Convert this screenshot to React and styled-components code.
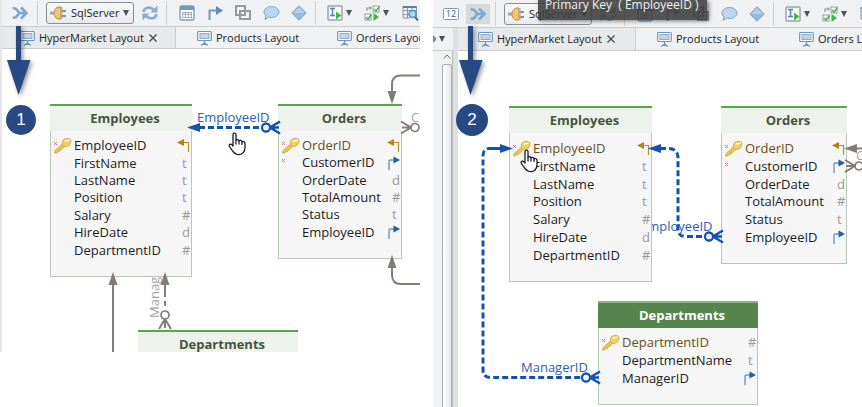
import React from "react";
import styled, { createGlobalStyle } from "styled-components";

const BLUE = "#1353ae";
const GREY = "#857d74";
const NAVY = "#264a81";
const UI_FONT = '"Open Sans", "Noto Sans", sans-serif';

const GlobalStyle = createGlobalStyle`
  * { box-sizing: border-box; }
  body { margin: 0; background: #fff; font-family: ${UI_FONT}; color: #222; }
  button, select { font: inherit; color: inherit; background: none; border: 0; padding: 0; margin: 0; }
  svg { display: block; flex: none; }
`;

const Page = styled.main`
  display: grid;
  grid-template-columns: minmax(0, 420fr) 13px minmax(0, 429fr);
  align-items: start;
  min-height: 100vh;
  overflow: hidden;
`;

const Panel = styled.section`
  position: relative;
  grid-column: ${(p) => p.$column};
  border-left: ${(p) => (p.$edge ? "2px solid #e6e6e6" : "0")};
  min-width: 0;
`;

const Toolbar = styled.div`
  display: flex;
  align-items: center;
  height: ${(p) => p.$height}px;
  padding-left: ${(p) => p.$start}px;
  background: #f0f1f2;
  border-bottom: 1px solid #cbcdcf;
  overflow: hidden;
`;

const ToolButton = styled.button`
  display: flex;
  flex: none;
  align-items: center;
  justify-content: center;
  width: 28px;
  height: 20px;
`;

const MergeButton = styled(ToolButton)`
  width: 24px;
  margin-right: 5px;
  background: ${(p) => (p.$pressed ? "#d6d9db" : "transparent")};
`;

const CalendarButton = styled(ToolButton)`
  width: 30px;
`;

const SplitButton = styled(ToolButton)`
  justify-content: flex-start;
  gap: 3px;
  width: 37px;
  padding-left: 5px;
`;

const Divider = styled.span`
  flex: none;
  width: 1px;
  height: 24px;
  margin: 0 6px 0 2px;
  background: #cdcfd1;
  &:first-of-type { margin-left: 0; }
`;

const ConnectionBox = styled.label`
  display: flex;
  flex: none;
  align-items: center;
  width: 88px;
  height: 22px;
  margin: 0 2px;
  padding: 0 4px 0 3px;
  border: 1px solid #8b8e91;
  border-radius: 3px;
  background: linear-gradient(#f7f8f8, #e9ebec);
`;

const ConnectionSelect = styled.select`
  appearance: none;
  flex: 1;
  min-width: 0;
  padding-left: 4px;
  font-size: 11px;
  line-height: 18px;
`;

const TabBar = styled.div`
  display: flex;
  height: ${(p) => p.$height}px;
  background: #f0f1f2;
  border-bottom: 1px solid #cbcdcf;
  overflow: hidden;
`;

const TabItem = styled.div`
  display: flex;
  flex: none;
  align-items: center;
  gap: 5px;
  min-width: ${(p) => p.$width}px;
  padding-left: ${(p) => p.$start}px;
  height: 100%;
  background: ${(p) => (p.$active ? "#e8e9ea" : "transparent")};
  border-right: ${(p) => (p.$active ? "1px solid #cbcdcf" : "0")};
`;

const TabButton = styled.button`
  display: flex;
  align-items: center;
  gap: 4px;
  font-size: 11px;
  line-height: 18px;
  white-space: nowrap;
`;

const Workspace = styled.div`
  display: flex;
`;

const Editor = styled.div`
  flex: 1;
  min-width: 0;
`;

const Dock = styled.aside`
  display: flex;
  flex-direction: column;
  flex: none;
  width: 25px;
  background: #f0f1f2;
  border-right: 5px solid #dde0e1;
`;

const DockHeader = styled.div`
  display: flex;
  align-items: center;
  gap: 3px;
  height: 23px;
  border-bottom: 1px solid #cbcdcf;
`;

const ScrollTrack = styled.div`
  display: flex;
  flex: 1;
  flex-direction: column;
  align-items: center;
  gap: 5px;
  width: 12px;
  margin-left: 8px;
  padding-top: 3px;
  border-right: 1px solid #b9bcbe;
`;

const ScrollThumb = styled.div`
  flex: 1;
  width: 10px;
  border: 1px solid #a9adb0;
  border-bottom: 0;
  border-radius: 3px 3px 0 0;
  background: linear-gradient(90deg, #fff, #e4e6e8);
`;

const Canvas = styled.div`
  position: relative;
  height: ${(p) => p.$height}px;
  background: #fff;
  overflow: hidden;
`;

const Layer = styled.svg`
  position: absolute;
  inset: 0;
  width: 100%;
  height: 100%;
  pointer-events: none;
`;

const EdgeLabel = styled.text`
  font-family: ${UI_FONT};
  font-size: 13px;
  fill: ${(p) => (p.$muted ? "#a5a5a5" : "#2c60b4")};
`;

const Node = styled.article`
  position: absolute;
  left: ${(p) => p.$x}px;
  top: ${(p) => p.$y}px;
  width: ${(p) => p.$width}px;
  padding-bottom: 17px;
  background: #f6f6f6;
  border: 1px solid #b9c9b9;
  border-top: 0;
`;

const NodeTitle = styled.h2`
  margin: 0 -1px;
  height: 27px;
  padding-left: 8px;
  border-top: 2px solid ${(p) => (p.$filled ? "#8fb088" : "#5aa44e")};
  background: ${(p) => (p.$filled ? "#56854e" : "#edf2ec")};
  color: ${(p) => (p.$filled ? "#fff" : "#47543f")};
  font-size: 13px;
  line-height: 25px;
  font-weight: 700;
  text-align: center;
`;

const Columns = styled.ul`
  display: grid;
  grid-auto-rows: 1fr;
  height: ${(p) => p.$height}px;
  margin: ${(p) => p.$gap}px 0 0;
  padding: 0;
  list-style: none;
`;

const Column = styled.li`
  display: grid;
  grid-template-columns: 23px 1fr 14px;
  align-items: center;
  min-height: 0;
  font-size: 13px;
  line-height: 17px;
  color: ${(p) => (p.$primary ? "#65501f" : "#1c1c1c")};
  white-space: nowrap;
`;

const ColumnType = styled.span`
  padding-left: 5px;
  color: #999b98;
`;

const CalloutArrow = styled.svg`
  position: absolute;
  left: ${(p) => p.$x}px;
  top: 26px;
  filter: drop-shadow(2px 2px 2px rgba(0, 0, 0, 0.4));
`;

const StepBadge = styled.span`
  position: absolute;
  left: ${(p) => p.$x}px;
  top: ${(p) => p.$y}px;
  width: ${(p) => p.$size}px;
  height: ${(p) => p.$size}px;
  border-radius: 50%;
  background: ${NAVY};
  color: #fff;
  font-family: "Liberation Sans", Arial, sans-serif;
  font-size: 17px;
  line-height: ${(p) => p.$size}px;
  text-align: center;
`;

const Tooltip = styled.div`
  position: absolute;
  left: 105px;
  top: 0;
  height: 20px;
  padding: 0 8px 0 7px;
  background: rgba(62, 62, 62, 0.88);
  box-shadow: 2px 1px 4px rgba(0, 0, 0, 0.5);
  color: #eee;
  font-size: 12px;
  line-height: 10px;
  white-space: pre;
`;

const PointerIcon = styled.svg`
  position: absolute;
  left: ${(p) => p.$x}px;
  top: ${(p) => p.$y}px;
`;

/* ---------- icons ---------- */

const Caret = () => (
  <svg width="6" height="6" viewBox="0 0 6 6"><path d="M0 0H6L3 6Z" fill="#505050" /></svg>
);

const MergeIcon = () => (
  <svg width="17" height="14" viewBox="0 0 17 14" fill="none" stroke="#7aa8d0" strokeWidth="2.6">
    <path d="M.8 2L4 2.800L7.500 7L4 11.200L.8 12M7 7H14M9 1.500L14.500 7L9 12.500" />
  </svg>
);

const PlugIcon = () => (
  <svg width="17" height="14" viewBox="0 0 17 14">
    <rect x="0" y="5.5" width="5" height="3" fill="#a6a8ac" />
    <path d="M11 1V13H9C6 13 4 10 4 7S6 1 9 1Z" fill="#edc47a" stroke="#c28d3c" />
    <path d="M11.5 4H16V6H11.5ZM11.5 9H16V11H11.5Z" fill="#8d9095" />
    <path d="M12 1V13" stroke="#a2a4a8" />
  </svg>
);

const RefreshIcon = () => (
  <svg width="16" height="16" viewBox="0 0 16 16" fill="none" stroke="#86b0d3" strokeWidth="2.600">
    <path d="M1.500 7C2 2.500 8 1 12 5M14.500 9C14 13.500 8 15 4 11" />
    <path d="M15.500 .5V7.500H8.500ZM.5 15.500V8.500H7.500Z" fill="#86b0d3" stroke="none" />
  </svg>
);

const TableIcon = () => (
  <svg width="16" height="16" viewBox="0 0 16 16">
    <rect x="1" y="1" width="14" height="14" rx="2" fill="#fff" stroke="#7a9fc0" strokeWidth="1.4" />
    <path d="M1 3Q1 1 3 1H13Q15 1 15 3V5H1Z" fill="#6d9bc4" />
    <path d="M3.500 7.500H12.500M3.500 9.500H12.500M3.500 12.500H12.500M3.500 7V13M6.500 7V13M9.500 7V13M12.500 7V13" stroke="#a7afb6" />
  </svg>
);

const ElbowIcon = () => (
  <svg width="15" height="14" viewBox="0 0 15 14">
    <path d="M1.500 14V4.500H10" fill="none" stroke="#7198bd" strokeWidth="2" />
    <path d="M8 0L15 4.500L8 9Z" fill="#5b8ebd" />
  </svg>
);

const ShapesIcon = () => (
  <svg width="16" height="16" viewBox="0 0 16 16" fill="none" stroke="#97999b" strokeWidth="2">
    <rect x="1" y="1" width="9" height="9" /><rect x="5" y="6" width="10" height="8" />
  </svg>
);

const BubbleIcon = () => (
  <svg width="17" height="16" viewBox="0 0 17 16">
    <path d="M8.500 1.500C12.600 1.500 16 4 16 7S12.600 12.500 8.500 12.500C7.500 12.500 6.500 12.400 5.600 12.100L2 14.500L3 10.700C1.700 9.700 1 8.400 1 7C1 4 4.400 1.500 8.500 1.500Z" fill="#bcd7ed" stroke="#7ea6c8" />
  </svg>
);

const DiamondIcon = () => (
  <svg width="16" height="16" viewBox="0 0 16 16"><path d="M8 .8L15.200 8L8 15.200L.8 8Z" fill="#94bbdb" stroke="#7aa4c8" /><path d="M8 2L14 8H2Z" fill="#b4d0e7" /></svg>
);

const RunIcon = () => (
  <svg width="16" height="16" viewBox="0 0 16 16">
    <rect x="1" y="1" width="14" height="14" rx="1" fill="#f8f8f8" stroke="#a0a2a4" strokeWidth="1.500" />
    <path d="M3 3.500H8M5.500 3.500V10M3 10.500H8" stroke="#5d7fc2" strokeWidth="1.500" />
    <path d="M9 6.500L14.500 10.500L9 14.500Z" fill="#44b34d" />
  </svg>
);

const ChecksIcon = () => (
  <svg width="16" height="16" viewBox="0 0 16 16" fill="none">
    <path d="M3 6V3H7" stroke="#999" strokeWidth="1.200" /><path d="M5.500 1L8 3L5.500 5Z" fill="#999" />
    <rect x="9" y="1" width="6" height="6" fill="#fff" stroke="#999b9d" /><rect x="1" y="9" width="6" height="6" fill="#fff" stroke="#999b9d" />
    <path d="M10 4L12 6L15.500 1.500M2 12L4 14L7.500 9.500" stroke="#44b34d" strokeWidth="1.500" />
    <path d="M9.500 8L15 12L9.500 16Z" fill="#44b34d" />
  </svg>
);

const SearchGridIcon = () => (
  <svg width="17" height="16" viewBox="0 0 17 16" fill="none">
    <path d="M1 1.500H14.500V13M1 1V13H8M1 5.500H14M1 9.500H9M5.500 2V13M10 2V7" stroke="#8d949c" />
    <path d="M1 2H14.500" stroke="#5f7f9e" strokeWidth="2" />
    <circle cx="10.500" cy="9" r="3.500" fill="#a7dcf0" stroke="#5795b4" strokeWidth="1.500" /><path d="M13 12L16 15.500" stroke="#477594" strokeWidth="2" />
  </svg>
);

const NumberIcon = () => (
  <svg width="16" height="12" viewBox="0 0 16 12">
    <rect x=".5" y=".5" width="15" height="11" rx="1" fill="#f9fafb" stroke="#809bb2" />
    <text x="8" y="9" textAnchor="middle" fontSize="9" fontFamily="Open Sans" fill="#43678a">12</text>
  </svg>
);

const BoardIcon = () => (
  <svg width="15" height="16" viewBox="0 0 15 16">
    <rect x=".7" y="1.500" width="13.600" height="9" rx="1" fill="#fff" stroke="#6f97bd" strokeWidth="1.200" />
    <rect x="3" y="3.500" width="9" height="5" fill="#c5d3e7" stroke="#91acc9" />
    <path d="M7.500 11V13L4 15.500M7.500 13L11 15.500M7.500 13V15" fill="none" stroke="#6f97bd" strokeWidth="1.200" />
  </svg>
);

const CloseIcon = () => (
  <svg width="8" height="8" viewBox="0 0 8 8"><path d="M.5 .5L7.500 7.500M7.500 .5L.5 7.500" stroke="#4c4c4c" strokeWidth="1.400" /></svg>
);

const ColumnIcon = ({ icon }) => (
  <svg width="22" height="17" viewBox="0 0 22 17">
    {icon && <path d="M3 5L6 8M6 5L3 8" stroke="#c98080" />}
    {icon === "key" && (
      <g>
        <path d="M11.500 7L4 13.500L3.500 16H6L6.500 14.500H8.500V13H10L13.500 9.500Z" fill="#ecc644" stroke="#c6a443" strokeWidth=".7" />
        <path d="M12.500 2.500Q15.500 .5 18.500 1.500Q20.800 2.500 19.800 5.500Q19 9 15.500 9.500Q12.500 10 11.300 8Q10.500 5 12.500 2.500Z" fill="#f0d058" stroke="#c6a443" strokeWidth=".7" />
        <path d="M14 4L18.300 3.200" stroke="#fdf6d8" strokeWidth="1.600" strokeLinecap="round" />
      </g>
    )}
  </svg>
);

const ReferenceMark = ({ type }) =>
  type === "in" ? (
    <svg width="13" height="14" viewBox="0 0 13 14"><path d="M5 3.500H11.500V13" fill="none" stroke="#b5932a" strokeWidth="1.200" /><path d="M0 3.500L7 0V7Z" fill="#b0860d" /></svg>
  ) : (
    <svg width="13" height="14" viewBox="0 0 13 14"><path d="M2 14V5.500Q2 4 4 4H7" fill="none" stroke="#6d97bd" strokeWidth="1.400" /><path d="M6.500 .5L13 4L6.500 7.500Z" fill="#27608f" /></svg>
  );

const HandPointer = ({ x, y }) => (
  <PointerIcon $x={x} $y={y} width="18" height="24" viewBox="0 0 18 24">
    <path d="M5 14V2.600C5 .5 8 .5 8 2.600V8.500C8.500 7.300 10.800 7.400 11 9C11.600 8 13.700 8.200 14 9.800C14.800 9 17 9.400 17 11.300V15.500C17 19.500 14.500 22.700 10.500 22.700C6.500 22.700 4.500 19 1.300 14.300C.5 12.500 2.500 11.300 4 12.800Z" fill="#fff" stroke="#1b1b2b" strokeWidth="1.300" strokeLinejoin="round" />
    <path d="M8 8.500V12.500M11 9V12.500M14 10V13" stroke="#1b1b2b" strokeWidth="1.200" />
  </PointerIcon>
);

/* ---------- edge endings ---------- */

const Head = ({ x, y, turn = 0, color = BLUE }) => (
  <path d="M0 0L-13 -4.500V4.500Z" transform={`translate(${x} ${y}) rotate(${turn})`} fill={color} />
);

/* Crow's foot whose open side touches the node at (x, y). */
const CrowFoot = ({ x, y, turn = 0, color = BLUE, weight = 2.6 }) => (
  <g transform={`translate(${x} ${y}) rotate(${turn})`} fill="none" stroke={color} strokeWidth={weight}>
    <path d="M1 -6L-9 0L1 6M-9 0H0" />
    <circle cx="-13" cy="0" r="4" fill="#fff" strokeWidth={weight - 0.3} />
  </g>
);

const dashed = { fill: "none", stroke: BLUE, strokeWidth: 3, strokeDasharray: "6 3", strokeLinecap: "butt" };

/* ---------- composed parts ---------- */

function ToolStrip({ height, start, withNumber }) {
  return (
    <Toolbar $height={height} $start={start} role="toolbar">
      {withNumber && <CalendarButton aria-label="Numbers"><NumberIcon /></CalendarButton>}
      <MergeButton $pressed={withNumber} aria-label="Follow references"><MergeIcon /></MergeButton>
      <Divider />
      <ConnectionBox>
        <PlugIcon />
        <ConnectionSelect aria-label="Connection" defaultValue="SqlServer"><option>SqlServer</option></ConnectionSelect>
        <Caret />
      </ConnectionBox>
      <ToolButton aria-label="Refresh"><RefreshIcon /></ToolButton>
      <Divider />
      <ToolButton aria-label="Table"><TableIcon /></ToolButton>
      <ToolButton aria-label="Relation"><ElbowIcon /></ToolButton>
      <ToolButton aria-label="Group"><ShapesIcon /></ToolButton>
      <ToolButton aria-label="Comment"><BubbleIcon /></ToolButton>
      <ToolButton aria-label="Shape"><DiamondIcon /></ToolButton>
      <Divider />
      <SplitButton aria-label="Run"><RunIcon /><Caret /></SplitButton>
      <SplitButton aria-label="Validate"><ChecksIcon /><Caret /></SplitButton>
      <ToolButton aria-label="Browse data"><SearchGridIcon /></ToolButton>
    </Toolbar>
  );
}

function Tabs({ height, tabs }) {
  return (
    <TabBar $height={height} role="tablist">
      {tabs.map((t, i) => (
        <TabItem key={t.label} $active={i === 0} $width={t.width} $start={t.start}>
          <TabButton role="tab" aria-selected={i === 0}><BoardIcon />{t.label}</TabButton>
          {i === 0 && <button aria-label="Close tab"><CloseIcon /></button>}
        </TabItem>
      ))}
    </TabBar>
  );
}

function Entity({ x, y, width, title, filled, gap = 6, listHeight, columns }) {
  return (
    <Node $x={x} $y={y} $width={width}>
      <NodeTitle $filled={filled}>{title}</NodeTitle>
      <Columns $height={listHeight} $gap={gap}>
        {columns.map(([name, type, icon, primary]) => (
          <Column key={name} $primary={primary}>
            <ColumnIcon icon={icon} />
            <span>{name}</span>
            {type === "in" || type === "out" ? <ReferenceMark type={type} /> : <ColumnType>{type}</ColumnType>}
          </Column>
        ))}
      </Columns>
    </Node>
  );
}

const Callout = ({ x }) => (
  <CalloutArrow $x={x} width="24" height="70" viewBox="0 0 24 70"><path d="M9 0H14V34H23.500L11.500 69L0 34H9Z" fill={NAVY} /></CalloutArrow>
);

const employees = (primary) => [
  ["EmployeeID", "in", "key", primary],
  ["FirstName", "t"],
  ["LastName", "t"],
  ["Position", "t"],
  ["Salary", "#"],
  ["HireDate", "d"],
  ["DepartmentID", "#"],
];

const orders = [
  ["OrderID", "in", "key", true],
  ["CustomerID", "out", "mark"],
  ["OrderDate", "d"],
  ["TotalAmount", "#"],
  ["Status", "t"],
  ["EmployeeID", "out"],
];

const departments = [
  ["DepartmentID", "#", "key", true],
  ["DepartmentName", "t"],
  ["ManagerID", "out"],
];

function FirstStep() {
  return (
    <Panel $column={1} $edge>
      <ToolStrip height={27} start={6} />
      <Tabs
        height={22}
        tabs={[
          { label: "HyperMarket Layout", width: 174, start: 18 },
          { label: "Products Layout", width: 140, start: 21 },
          { label: "Orders Layout", width: 140, start: 21 },
        ]}
      />
      <Canvas $height={303}>
        <Layer>
          <EdgeLabel x="195" y="73">EmployeeID</EdgeLabel>
          <EdgeLabel $muted x="409" y="73">CustomerID</EdgeLabel>
          <EdgeLabel $muted transform="translate(157 269) rotate(-90)">ManagerID</EdgeLabel>
        </Layer>
        <Entity x={48} y={55} width={142} title="Employees" listHeight={122} columns={employees(false)} />
        <Entity x={276} y={55} width={124} title="Orders" listHeight={104} columns={orders} />
        <Entity x={136} y={281} width={160} title="Departments" listHeight={53} columns={departments} />
        <Layer>
          <path d="M197 78.500H258" {...dashed} />
          <Head x={185} y={78.5} turn={180} />
          <CrowFoot x={277} y={78.5} />
          <g fill="none" stroke={GREY} strokeWidth="2">
            <path d="M420 26.500H399Q390 26.500 390 35V46" />
            <path d="M420 235H399Q390 235 390 226V216" />
            <path d="M111 303V234M163 234V248M163 252V257" />
          </g>
          <Head x={390} y={55} turn={90} color={GREY} />
          <Head x={390} y={206} turn={-90} color={GREY} />
          <Head x={111} y={223} turn={-90} color={GREY} />
          <Head x={163} y={223} turn={-90} color={GREY} />
          <CrowFoot x={400} y={78.5} turn={180} color={GREY} weight={2} />
          <CrowFoot x={163} y={279} turn={90} color={GREY} weight={2} />
        </Layer>
        <HandPointer x={226} y={83} />
      </Canvas>
      <Callout x={5} />
      <StepBadge $x={4} $y={105} $size={30}>1</StepBadge>
    </Panel>
  );
}

function SecondStep() {
  return (
    <Panel $column={3}>
      <ToolStrip height={28} start={3} withNumber />
      <Workspace>
        <Dock>
          <DockHeader>
            <svg width="3" height="8" viewBox="0 0 3 8"><path d="M0 0L3 3V5L0 8Z" fill="#5c8fb9" /></svg>
            <Caret />
          </DockHeader>
          <ScrollTrack>
            <svg width="8" height="5" viewBox="0 0 8 5"><path d="M.5 4.500L4 1L7.500 4.500" fill="none" stroke="#777" /></svg>
            <ScrollThumb />
          </ScrollTrack>
        </Dock>
        <Editor>
          <Tabs
            height={23}
            tabs={[
              { label: "HyperMarket Layout", width: 178, start: 20 },
              { label: "Products Layout", width: 142, start: 21 },
              { label: "Orders Layout", width: 142, start: 21 },
            ]}
          />
          <Canvas $height={356}>
            <Layer>
              <EdgeLabel x="182" y="180">EmployeeID</EdgeLabel>
              <EdgeLabel x="63" y="321">ManagerID</EdgeLabel>
              <EdgeLabel $muted x="398" y="109">CustomerID</EdgeLabel>
            </Layer>
            <Entity x={51} y={55} width={143} title="Employees" gap={7} listHeight={124} columns={employees(true)} />
            <Entity x={263} y={55} width={126} title="Orders" gap={7} listHeight={106} columns={orders} />
            <Entity x={140} y={250} width={160} title="Departments" filled listHeight={53} columns={departments} />
            <Layer>
              <path d="M44 97.500H31Q25 98 25 105V319Q25 326.500 33 326.500H123" {...dashed} />
              <path d="M31 97.500H44" stroke={BLUE} strokeWidth="3" />
              <Head x={55} y={97.5} />
              <CrowFoot x={141} y={326.5} />
              <path d="M202 97.500H211Q220 98 220 107V178Q220 185.500 228 185.500H247" {...dashed} />
              <Head x={190} y={97.5} turn={180} />
              <CrowFoot x={264} y={185.5} />
              <path d="M396 97.500H410" stroke={GREY} strokeWidth="2" />
              <Head x={386} y={97.5} turn={180} color={GREY} />
              <CrowFoot x={388} y={115} turn={180} color={GREY} weight={2} />
            </Layer>
            <HandPointer x={62} y={98} />
          </Canvas>
        </Editor>
      </Workspace>
      <Callout x={26} />
      <StepBadge $x={23} $y={104} $size={32}>2</StepBadge>
      <Tooltip role="tooltip">{"Primary Key  ( EmployeeID )"}</Tooltip>
    </Panel>
  );
}

export default function App() {
  return (
    <Page>
      <GlobalStyle />
      <FirstStep />
      <SecondStep />
    </Page>
  );
}
